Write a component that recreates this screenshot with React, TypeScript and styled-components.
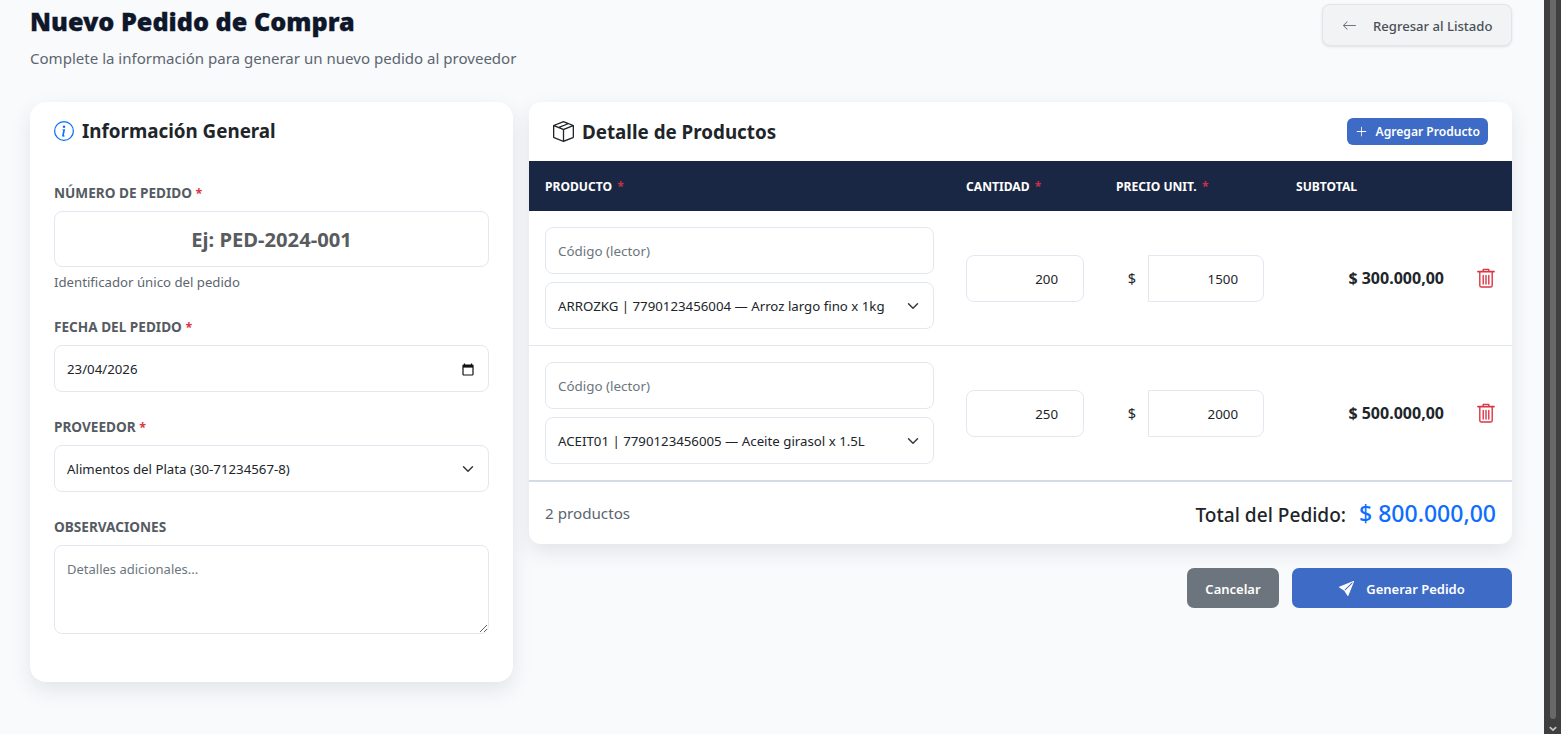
import { createGlobalStyle, styled } from 'styled-components';
import {
  BsArrowLeft,
  BsBoxSeam,
  BsInfoCircle,
  BsPlusLg,
  BsSendFill,
} from 'react-icons/bs';

const GlobalStyle = createGlobalStyle`
  html, body {
    margin: 0;
    height: 100%;
    overflow: hidden;
    background: #f9fafc;
    font-family: "Noto Sans", "Open Sans", sans-serif;
  }
  * { box-sizing: border-box; }
`;

const rows = [
  { id: 1, product: 'ARROZKG | 7790123456004 — Arroz largo fino x 1kg', qty: '200', price: '1500', subtotal: '$ 300.000,00' },
  { id: 2, product: 'ACEIT01 | 7790123456005 — Aceite girasol x 1.5L', qty: '250', price: '2000', subtotal: '$ 500.000,00' },
];

const Chevron = () => (
  <svg width='12' height='12' viewBox='0 0 16 16' fill='none' stroke='#343a40' strokeWidth='2' strokeLinecap='round' strokeLinejoin='round'>
    <path d='m2 5 6 6 6-6' />
  </svg>
);

const CalendarIcon = () => (
  <svg width='12' height='13' viewBox='0 0 12 13' fill='none'>
    <path d='M2.5 0.5v2M9.5 0.5v2' stroke='#111' strokeWidth='1.2' />
    <rect x='1' y='2' width='10' height='10' rx='0.8' stroke='#111' strokeWidth='1.2' />
    <rect x='1' y='2' width='10' height='2.6' fill='#111' />
  </svg>
);

const TrashIcon = () => (
  <svg width='18' height='20' viewBox='0 0 18 20' fill='none' stroke='#dc3545' strokeWidth='1.4' strokeLinecap='round' strokeLinejoin='round'>
    <path d='M6.2 3V1.4h5.6V3' />
    <path d='M1 3.6h16' strokeWidth='1.8' />
    <path d='M2.8 4v13.4c0 .9.7 1.6 1.6 1.6h9.2c.9 0 1.6-.7 1.6-1.6V4' />
    <path d='M6.2 7.5v8.5M9 7.5v8.5M11.8 7.5v8.5' />
  </svg>
);

const App = () => (
  <Shell>
    <GlobalStyle />
    <Page>
      <Header>
        <div>
          <Title>Nuevo Pedido de Compra</Title>
          <Subtitle>Complete la información para generar un nuevo pedido al proveedor</Subtitle>
        </div>
        <BackButton>
          <BsArrowLeft size={15} color='#6c757d' />
          <BackText>Regresar al Listado</BackText>
        </BackButton>
      </Header>
      <Columns>
        <InfoCard>
          <CardTitle>
            <BsInfoCircle size={20} color='#0d6efd' />
            Información General
          </CardTitle>
          <Group $top={40}>
            <Label>NÚMERO DE PEDIDO <Req>*</Req></Label>
            <OrderBox placeholder='Ej: PED-2024-001' />
            <Hint>Identificador único del pedido</Hint>
          </Group>
          <Group $top={27}>
            <Label>FECHA DEL PEDIDO <Req>*</Req></Label>
            <SelectBox>
              <span>23/04/2026</span>
              <CalendarIcon />
            </SelectBox>
          </Group>
          <Group $top={26}>
            <Label>PROVEEDOR <Req>*</Req></Label>
            <SelectBox>
              <span>Alimentos del Plata (30-71234567-8)</span>
              <Chevron />
            </SelectBox>
          </Group>
          <Group $top={26}>
            <Label>OBSERVACIONES</Label>
            <Notes placeholder='Detalles adicionales...' />
          </Group>
        </InfoCard>
        <RightColumn>
          <ProductsCard>
            <ProductsHead>
              <CardTitle>
                <BsBoxSeam size={21} color='#212529' />
                Detalle de Productos
              </CardTitle>
              <AddButton>
                <BsPlusLg size={13} />
                Agregar Producto
              </AddButton>
            </ProductsHead>
            <TableHead>
              <span>PRODUCTO <HeadReq>*</HeadReq></span>
              <span>CANTIDAD <HeadReq>*</HeadReq></span>
              <span>PRECIO UNIT. <HeadReq>*</HeadReq></span>
              <span>SUBTOTAL</span>
            </TableHead>
            {rows.map((row) => (
              <TableRow key={row.id}>
                <ProductCell>
                  <CodeInput placeholder='Código (lector)' />
                  <SelectBox>
                    <span>{row.product}</span>
                    <Chevron />
                  </SelectBox>
                </ProductCell>
                <NumberBox readOnly value={row.qty} />
                <PriceCell>
                  <span>$</span>
                  <PriceBox readOnly value={row.price} />
                </PriceCell>
                <Subtotal>{row.subtotal}</Subtotal>
                <DeleteIcon><TrashIcon /></DeleteIcon>
              </TableRow>
            ))}
            <TableFoot>
              <Count>2 productos</Count>
              <TotalWrap>
                <TotalLabel>Total del Pedido:</TotalLabel>
                <TotalValue>$ 800.000,00</TotalValue>
              </TotalWrap>
            </TableFoot>
          </ProductsCard>
          <Actions>
            <CancelButton>Cancelar</CancelButton>
            <SubmitButton>
              <BsSendFill size={15} />
              Generar Pedido
            </SubmitButton>
          </Actions>
        </RightColumn>
      </Columns>
    </Page>
    <ScrollRail>
      <ScrollThumb />
      <svg width='8' height='6' viewBox='0 0 8 6' fill='none' stroke='#c8c8c8' strokeWidth='1.6'>
        <path d='m.8 1.2 3.2 3 3.2-3' />
      </svg>
    </ScrollRail>
  </Shell>
);

const Shell = styled.div`
  display: flex;
  height: 734px;
  overflow: hidden;
`;

const Page = styled.main`
  flex: 1;
  padding: 0 32px 0 30px;
`;

const Header = styled.header`
  display: flex;
  justify-content: space-between;
  align-items: flex-start;
  padding-top: 4px;
  height: 102px;
`;

const Title = styled.h1`
  margin: 0;
  font-size: 25.2px;
  line-height: 34px;
  font-weight: 900;
  color: #0f172a;
  -webkit-text-stroke: 0.3px #0f172a;
`;

const Subtitle = styled.p`
  margin: 9px 0 0;
  font-size: 15.05px;
  line-height: 22px;
  color: #5c6670;
`;

const BackButton = styled.button`
  display: flex;
  align-items: center;
  gap: 16px;
  width: 190px;
  height: 42px;
  padding: 0 0 0 19px;
  background: #f2f3f5;
  border: 1px solid #e2e4e8;
  border-radius: 8px;
  box-shadow: 0 1px 3px rgba(0, 0, 0, 0.1);
  color: #495057;
  font: 500 13.1px "Noto Sans", sans-serif;
`;

const BackText = styled.span`
  padding-top: 2px;
  white-space: nowrap;
`;

const Columns = styled.div`
  display: grid;
  grid-template-columns: 483px 983px;
  gap: 16px;
  align-items: start;
`;

const InfoCard = styled.section`
  height: 580px;
  padding: 16px 24px;
  background: #fff;
  border-radius: 16px;
  box-shadow: 0 8px 20px rgba(30, 41, 59, 0.1);
`;

const CardTitle = styled.h2`
  display: flex;
  align-items: center;
  gap: 8px;
  margin: 0;
  font-size: 18.8px;
  line-height: 26px;
  font-weight: 700;
  color: #212529;
`;

const Group = styled.div<{ $top: number }>`
  margin-top: ${(p) => p.$top}px;
`;

const Label = styled.div`
  margin-bottom: 9px;
  font-size: 13.6px;
  line-height: 18px;
  font-weight: 700;
  color: #555b62;
`;

const Req = styled.span`
  font-size: 12.5px;
  line-height: 1;
  color: #dc3545;
`;

const HeadReq = styled.span`
  margin-left: 2px;
  color: #c4304c;
`;

const fieldBorder = `
  background: #fff;
  border: 1px solid #e2e8f0;
  border-radius: 8px;
  outline: none;
`;

const OrderBox = styled.input`
  ${fieldBorder}
  display: block;
  width: 100%;
  height: 56px;
  text-align: center;
  font: 700 20.2px "Noto Sans", sans-serif;
  &::placeholder { color: #595c5f; opacity: 1; }
`;

const Hint = styled.div`
  margin-top: 6px;
  font-size: 13.2px;
  line-height: 18px;
  color: #5c6670;
`;

const SelectBox = styled.div`
  ${fieldBorder}
  display: flex;
  align-items: center;
  justify-content: space-between;
  height: 47px;
  padding: 1px 14px 0 12px;
  color: #212529;
  font-size: 13.25px;
`;

const Notes = styled.textarea`
  ${fieldBorder}
  display: block;
  width: 100%;
  height: 89px;
  padding: 14px 12px;
  font: 400 13px "Noto Sans", sans-serif;
  &::placeholder { color: #6c757d; opacity: 1; }
`;

const RightColumn = styled.div`
  display: flex;
  flex-direction: column;
  gap: 24px;
`;

const ProductsCard = styled.section`
  background: #fff;
  border-radius: 12px;
  box-shadow: 0 8px 20px rgba(30, 41, 59, 0.1);
  overflow: hidden;
`;

const ProductsHead = styled.div`
  display: flex;
  align-items: center;
  justify-content: space-between;
  height: 59px;
  padding: 0 24px;
`;

const AddButton = styled.button`
  display: flex;
  align-items: center;
  gap: 8px;
  height: 27px;
  padding: 0 8px;
  background: #3d6bc6;
  border: none;
  border-radius: 6px;
  color: #fff;
  font: 600 12.1px "Noto Sans", sans-serif;
`;

const TableHead = styled.div`
  display: grid;
  grid-template-columns: 421px 150px 180px 1fr;
  align-items: center;
  height: 50px;
  padding-left: 16px;
  background: #1a2744;
  color: #fff;
  font-size: 12.1px;
  font-weight: 700;
`;

const TableRow = styled.div`
  display: grid;
  grid-template-columns: 389px 150px 180px 180px 1fr;
  align-items: center;
  height: 135px;
  padding: 0 17px 0 16px;
  border-bottom: 1px solid #e2e8f0;
  &:nth-last-of-type(2) {
    height: 136px;
    border-bottom: 2px solid #d5dbe6;
  }
`;

const ProductCell = styled.div`
  display: flex;
  flex-direction: column;
  gap: 8px;
`;

const CodeInput = styled.input`
  ${fieldBorder}
  width: 100%;
  height: 47px;
  padding: 0 12px;
  font: 400 13.4px "Noto Sans", sans-serif;
  &::placeholder { color: #6c757d; opacity: 1; }
`;

const NumberBox = styled.input`
  ${fieldBorder}
  margin-left: 32px;
  width: 118px;
  height: 47px;
  padding: 2px 25px 0 12px;
  text-align: right;
  color: #212529;
  font: 400 13.3px "Noto Sans", sans-serif;
`;

const PriceCell = styled.div`
  display: flex;
  align-items: center;
  justify-content: flex-end;
  gap: 12px;
  color: #212529;
  font-size: 14.5px;
`;

const PriceBox = styled.input`
  ${fieldBorder}
  border-radius: 0 8px 8px 0;
  width: 116px;
  height: 47px;
  padding: 2px 25px 0 12px;
  text-align: right;
  color: #212529;
  font: 400 13.3px "Noto Sans", sans-serif;
`;

const Subtotal = styled.div`
  text-align: right;
  font-size: 16px;
  font-weight: 700;
  color: #212529;
`;

const DeleteIcon = styled.div`
  display: flex;
  justify-content: flex-end;
`;

const TableFoot = styled.div`
  display: flex;
  align-items: center;
  justify-content: space-between;
  height: 62px;
  padding: 0 16px;
`;

const Count = styled.span`
  font-size: 15.2px;
  color: #5c6670;
`;

const TotalWrap = styled.div`
  display: flex;
  align-items: baseline;
  gap: 13px;
`;

const TotalLabel = styled.span`
  font-size: 19.1px;
  font-weight: 500;
  color: #212529;
`;

const TotalValue = styled.span`
  font-size: 23px;
  font-weight: 500;
  color: #0d6efd;
`;

const Actions = styled.div`
  display: flex;
  justify-content: flex-end;
  gap: 13px;
`;

const CancelButton = styled.button`
  width: 92px;
  height: 40px;
  padding: 2px 0 0;
  background: #6c757d;
  border: none;
  border-radius: 7px;
  color: #fff;
  font: 600 13px "Noto Sans", sans-serif;
`;

const SubmitButton = styled.button`
  display: flex;
  align-items: center;
  justify-content: center;
  gap: 12px;
  width: 220px;
  height: 40px;
  padding: 1px 0 0;
  background: #3d6bc6;
  border: none;
  border-radius: 7px;
  color: #fff;
  font: 600 13px "Noto Sans", sans-serif;
`;

const ScrollRail = styled.div`
  flex: none;
  display: flex;
  flex-direction: column;
  align-items: center;
  gap: 7px;
  width: 17px;
  background: #3f3f3f;
`;

const ScrollThumb = styled.div`
  width: 6px;
  height: 719px;
  border-radius: 0 0 3px 3px;
  background: #686868;
`;

export default App;
